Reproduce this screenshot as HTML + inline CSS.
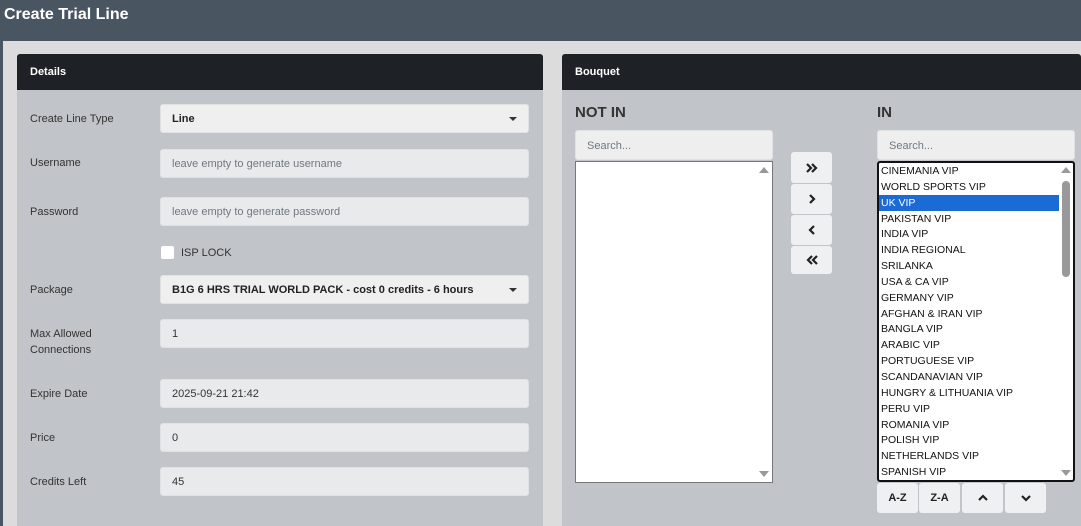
<!DOCTYPE html><html><head><style>
*{box-sizing:border-box;margin:0;padding:0}
body{width:1081px;height:526px;overflow:hidden;background:#4a5562;font-family:"Liberation Sans",sans-serif;position:relative}
.abs{position:absolute}
.title{left:4px;top:6px;color:#fff;font-size:16px;font-weight:bold}
.main{left:3px;top:41px;width:1078px;height:485px;background:#dcdcdc}
.panel{background:#c1c4c8;border-radius:3px 3px 0 0;overflow:hidden}
.ph{height:36px;background:#1e2125;color:#fff;font-size:11px;font-weight:bold;padding:12px 13px}
.lbl{left:30px;font-size:11px;color:#333;line-height:16px}
.inp{left:160px;width:369px;height:29px;background:#e8eaec;border:1px solid #dfe1e3;border-radius:3px;font-size:11px;color:#333;padding:8px 11px 0}
.ph2{color:#707880}
.sel{background:#efefef;color:#222;font-weight:bold}
.sel:after{content:"";position:absolute;right:11px;top:12px;border:4px solid transparent;border-top:4px solid #333;border-bottom:0}
.btn{background:#eff0f2;border-radius:3px;font-size:11px;font-weight:bold;color:#222;text-align:center;display:flex;align-items:center;justify-content:center}
.item{height:15.85px;font-size:10.5px;color:#111;line-height:16px;padding-left:2px;white-space:nowrap}
</style></head><body>
<div class="abs title">Create Trial Line</div>
<div class="abs main"></div>
<div class="abs panel" style="left:17px;top:54px;width:526px;height:472px"><div class="ph">Details</div></div>
<div class="abs lbl" style="top:111px">Create Line Type</div>
<div class="abs inp sel" style="top:104px">Line</div>
<div class="abs lbl" style="top:155px">Username</div>
<div class="abs inp ph2" style="top:149px">leave empty to generate username</div>
<div class="abs lbl" style="top:204px">Password</div>
<div class="abs inp ph2" style="top:197px">leave empty to generate password</div>
<div class="abs" style="left:161px;top:246px;width:13px;height:13px;background:#fff;border-radius:2px"></div>
<div class="abs lbl" style="left:181px;top:245px">ISP LOCK</div>
<div class="abs lbl" style="top:282px">Package</div>
<div class="abs inp sel" style="top:275px">B1G 6 HRS TRIAL WORLD PACK - cost 0 credits - 6 hours</div>
<div class="abs lbl" style="top:326px">Max Allowed<br>Connections</div>
<div class="abs inp" style="top:319px">1</div>
<div class="abs lbl" style="top:386px">Expire Date</div>
<div class="abs inp" style="top:379px">2025-09-21 21:42</div>
<div class="abs lbl" style="top:430px">Price</div>
<div class="abs inp" style="top:423px">0</div>
<div class="abs lbl" style="top:474px">Credits Left</div>
<div class="abs inp" style="top:467px">45</div>

<div class="abs panel" style="left:562px;top:54px;width:519px;height:472px"><div class="ph">Bouquet</div></div>
<div class="abs" style="left:575px;top:104px;font-size:15px;font-weight:bold;color:#333">NOT IN</div>
<div class="abs" style="left:877px;top:104px;font-size:15px;font-weight:bold;color:#333">IN</div>
<div class="abs inp ph2" style="left:575px;top:130px;width:198px;height:30px;background:#eee;padding-top:9px">Search...</div>
<div class="abs inp ph2" style="left:877px;top:130px;width:198px;height:30px;background:#eee;padding-top:9px">Search...</div>
<div class="abs" style="left:575px;top:161px;width:198px;height:322px;background:#fff;border:1px solid #777">
<div class="abs" style="right:3px;top:5px;border:5px solid transparent;border-bottom:6px solid #999;border-top:0"></div>
<div class="abs" style="right:3px;bottom:5px;border:5px solid transparent;border-top:6px solid #999;border-bottom:0"></div></div>
<svg width="0" height="0" style="position:absolute"></svg>
<div class="abs btn" style="left:791px;top:152px;width:41px;height:31px"><svg width="12" height="10" viewBox="0 0 12 10"><path d="M1 1l4 4-4 4M6 1l4 4-4 4" fill="none" stroke="#222" stroke-width="2.2"/></svg></div>
<div class="abs btn" style="left:791px;top:184px;width:41px;height:30px"><svg width="8" height="10" viewBox="0 0 8 10"><path d="M2 1l4 4-4 4" fill="none" stroke="#222" stroke-width="2.2"/></svg></div>
<div class="abs btn" style="left:791px;top:215px;width:41px;height:30px"><svg width="8" height="10" viewBox="0 0 8 10"><path d="M6 1l-4 4 4 4" fill="none" stroke="#222" stroke-width="2.2"/></svg></div>
<div class="abs btn" style="left:791px;top:246px;width:41px;height:28px"><svg width="12" height="10" viewBox="0 0 12 10"><path d="M6 1l-4 4 4 4M11 1l-4 4 4 4" fill="none" stroke="#222" stroke-width="2.2"/></svg></div>
<div class="abs" style="left:877px;top:161px;width:198px;height:321px;background:#fff;border:2px solid #111;border-radius:3px;overflow:hidden">
<div class="item">CINEMANIA VIP</div><div class="item">WORLD SPORTS VIP</div><div class="item" style="background:#1a6bd6;color:#fff;width:180px">UK VIP</div><div class="item">PAKISTAN VIP</div><div class="item">INDIA VIP</div><div class="item">INDIA REGIONAL</div><div class="item">SRILANKA</div><div class="item">USA &amp; CA VIP</div><div class="item">GERMANY VIP</div><div class="item">AFGHAN &amp; IRAN VIP</div><div class="item">BANGLA VIP</div><div class="item">ARABIC VIP</div><div class="item">PORTUGUESE VIP</div><div class="item">SCANDANAVIAN VIP</div><div class="item">HUNGRY &amp; LITHUANIA VIP</div><div class="item">PERU VIP</div><div class="item">ROMANIA VIP</div><div class="item">POLISH VIP</div><div class="item">NETHERLANDS VIP</div><div class="item">SPANISH VIP</div>
<div class="abs" style="right:2px;top:4px;border:5px solid transparent;border-bottom:6px solid #999;border-top:0"></div>
<div class="abs" style="right:3px;top:18px;width:8px;height:96px;background:#999;border-radius:4px"></div>
<div class="abs" style="right:2px;bottom:4px;border:5px solid transparent;border-top:6px solid #999;border-bottom:0"></div></div>
<div class="abs btn" style="left:877px;top:483px;width:41px;height:30px">A-Z</div>
<div class="abs btn" style="left:919px;top:483px;width:41px;height:30px">Z-A</div>
<div class="abs btn" style="left:962px;top:483px;width:41px;height:30px"><svg width="10" height="8" viewBox="0 0 10 8"><path d="M1 6l4-4 4 4" fill="none" stroke="#222" stroke-width="2.2"/></svg></div>
<div class="abs btn" style="left:1005px;top:483px;width:41px;height:30px"><svg width="10" height="8" viewBox="0 0 10 8"><path d="M1 2l4 4 4-4" fill="none" stroke="#222" stroke-width="2.2"/></svg></div>
</body></html>
